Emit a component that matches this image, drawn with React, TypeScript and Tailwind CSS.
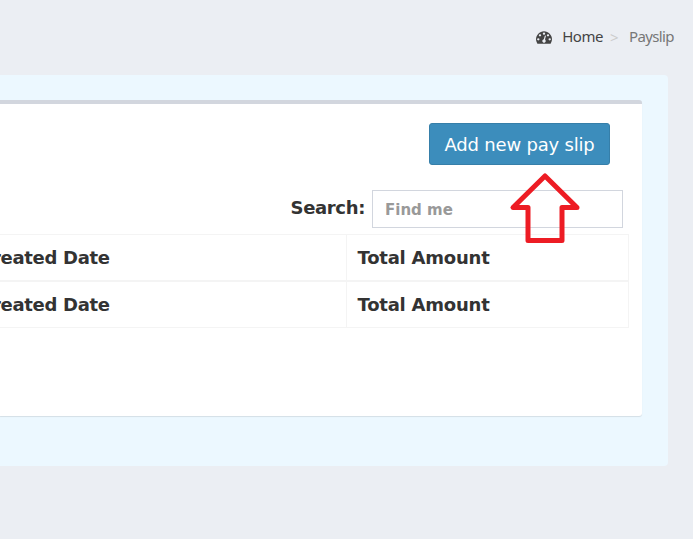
function DashboardIcon() {
  const dot = "q0-53-37.5-90.5t-90.5-37.5-90.5 37.5-37.5 90.5 37.5 90.5 90.5 37.5 90.5-37.5 37.5-90.5z";
  return (
    <svg className="h-4 w-4" viewBox="0 0 1792 1792" fill="currentColor" aria-hidden="true">
      <path
        d={`M384 1152${dot}m192-448${dot}m428 481l101-382q6-26-7.5-48.5t-38.5-29.5-48 6.5-30 39.5l-101 382q-60 5-107 43.5t-63 98.5q-20 77 20 146t117 89 146-20 89-117q16-60-6-117t-72-91zm660-33${dot}m-640-640${dot}m448 192${dot}m320 448q0 261-141 483-19 29-54 29h-1402q-35 0-54-29-141-221-141-483 0-182 71-348t191-286 286-191 348-71 348 71 286 191 191 286 71 348z`}
      />
    </svg>
  );
}

function Row({ className }: { className: string }) {
  return (
    <tr className={className}>
      <th className="border-y border-r border-[#f4f4f4] p-0 pt-0.5 text-left">
        <span className="-ml-[21px] block tracking-[-0.3px]">Created Date</span>
      </th>
      <th className="border border-[#f4f4f4] pt-0.5 pr-0 pb-0 pl-[11px] text-left">Total Amount</th>
    </tr>
  );
}

export default function App() {
  return (
    <div className="h-[539px] w-[693px] overflow-hidden bg-[#ebeef3] font-['DejaVu_Sans',sans-serif] text-[#333]">
      <nav className="flex h-[75px] items-start justify-end pt-[26px] pr-[19px] font-['Noto_Sans',sans-serif] text-[15px] leading-5 tracking-[-0.6px]">
        <a className="flex items-center text-[#444]">
          <span className="mr-2.5 pt-0.5"><DashboardIcon /></span>
          <span className="tracking-[-0.5px]">Home</span>
        </a>
        <span className="mr-[8px] ml-[7px] pt-px text-[15px] text-[#ccc]">&gt;</span>
        <span className="ml-[3px] text-[#777]">Payslip</span>
      </nav>
      <main className="mr-[25px] h-[391px] rounded-r-[4px] bg-[#ecf8ff] pt-[25px] pr-[26px]">
        <section className="h-[316px] rounded-r-[3px] border-t-4 border-[#d2d6de] bg-white shadow-[0_1px_1px_rgba(0,0,0,0.1)]">
          <div className="flex justify-end pt-[19px] pr-8">
            <button className="h-[42px] w-[181px] rounded-[3px] border border-[#367fa9] bg-[#3c8dbc] text-[18px] tracking-[-0.2px] whitespace-nowrap text-white">
              Add new pay slip
            </button>
          </div>
          <div className="relative mt-[25px] flex h-[38px] items-center justify-end pr-[19px]">
            <label className="mr-[7px] pb-[3px] text-[18px] font-bold tracking-[-0.35px]">Search:</label>
            <input
              placeholder="Find me"
              className="h-[38px] w-[251px] border border-[#d2d6de] bg-white px-3 pt-0.5 text-[15px] font-bold placeholder:text-[#999]"
            />
            <svg className="absolute -top-[18px] right-[61px] h-[72px] w-[72px]" viewBox="0 0 72 72" fill="none">
              <path d="M36 4 L4 35.5 H19 V68.5 H53 V35.5 H68 Z" stroke="#ed1c24" strokeWidth="5" strokeLinejoin="round" />
            </svg>
          </div>
          <table className="mt-[6px] w-[629px] table-fixed border-collapse text-[18px] leading-6 tracking-[-0.22px]">
            <colgroup>
              <col className="w-[346px]" />
              <col />
            </colgroup>
            <thead><Row className="h-[46px]" /></thead>
            <tfoot className="border-t-2 border-[#f4f4f4]"><Row className="h-[47px]" /></tfoot>
          </table>
        </section>
      </main>
    </div>
  );
}
